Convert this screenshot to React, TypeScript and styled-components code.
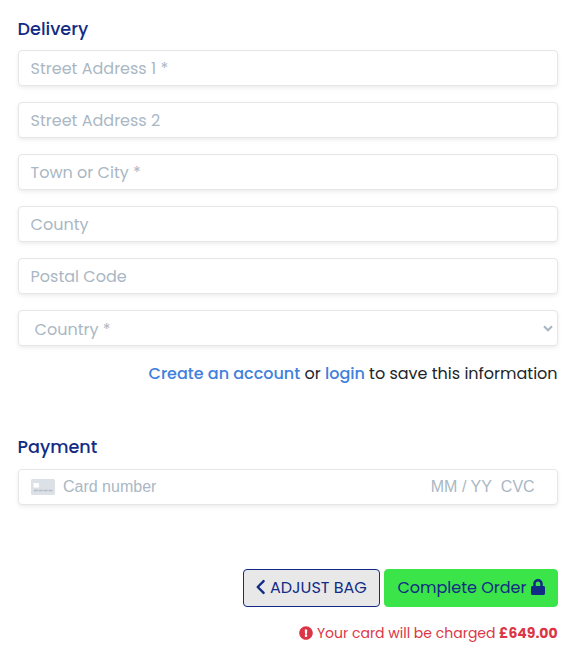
import React from 'react';
import styled, { createGlobalStyle } from 'styled-components';
import { FaLock, FaExclamationCircle } from 'react-icons/fa';

const GlobalStyle = createGlobalStyle`
  * { box-sizing: border-box; }
  body { margin: 0; background: #fff; }
  body, input, select, button {
    font-family: Poppins, Inter, "Open Sans", sans-serif;
  }
`;

const Form = styled.form`
  width: 580px;
  height: 667px;
  padding: 17px 22.4px 0 17.6px;
  font-size: 16px;
  line-height: 24px;
  color: #212529;
  overflow: hidden;
`;

const Legend = styled.h2`
  margin: 0 0 9px;
  height: 24px;
  font-size: 17.6px;
  line-height: 24px;
  font-weight: 500;
  color: #122b85;
`;

const PaymentLegend = styled(Legend)`
  margin-bottom: 10px;
`;

const Fields = styled.div`
  display: flex;
  flex-direction: column;
  gap: 16px;
`;

const Box = styled.div`
  display: flex;
  align-items: center;
  height: 36px;
  padding: 0 12px;
  background: #fff;
  border: 1px solid #e4e7ea;
  border-radius: 4px;
  box-shadow: 0 2px 4px rgba(0, 0, 0, 0.075);
`;

const Input = styled.input`
  width: 100%;
  padding: 2px 0 0;
  border: 0;
  outline: 0;
  background: transparent;
  font-size: 16px;
  line-height: 24px;
  &::placeholder { color: #aab7c4; opacity: 1; }
`;

const Select = styled.select`
  appearance: none;
  flex: 1;
  height: 34px;
  padding: 2px 0 0 4px;
  border: 0;
  background: transparent;
  color: #aab7c4;
  font-size: 16px;
`;

const Arrow = styled.svg`
  width: 10px;
  height: 7px;
  margin-right: -8px;
`;

const Account = styled.p`
  margin: 16px 0 49px;
  text-align: right;
  white-space: nowrap;
`;

const Link = styled.a`
  color: #4180dc;
  font-weight: 500;
`;

const CardText = styled.span`
  font-family: "Liberation Sans", Arial, sans-serif;
  font-size: 16px;
  color: #aab7c4;
  white-space: nowrap;
`;

const CardNumber = styled(CardText)`
  flex: 1;
  margin-left: 8.4px;
`;

const Expiry = styled(CardText)`
  margin-right: 9px;
`;

const Cvc = styled(CardText)`
  margin-right: 10px;
`;

const Actions = styled.div`
  display: flex;
  justify-content: flex-end;
  gap: 4px;
  margin-top: 64px;
`;

const Button = styled.button<{ $primary?: boolean }>`
  display: flex;
  align-items: center;
  gap: 4.4px;
  width: ${(p) => (p.$primary ? 174 : 137)}px;
  height: 38px;
  padding: 0 0 0 ${(p) => (p.$primary ? 12.8 : 12)}px;
  border: 1px solid ${(p) => (p.$primary ? '#3be449' : '#122b85')};
  border-radius: 4px;
  background: ${(p) => (p.$primary ? '#3be449' : '#e8e8e8')};
  color: #122b85;
  font-size: 16px;
  line-height: 24px;
  white-space: nowrap;
  svg { flex: none; margin-bottom: 2px; }
`;

const LockIcon = styled(FaLock)`
  width: 14px;
  height: 16px;
`;

const Warning = styled.p`
  display: flex;
  align-items: center;
  justify-content: flex-end;
  gap: 3.6px;
  margin: 16px 0 0;
  font-size: 14px;
  line-height: 21px;
  color: #dc3545;
  white-space: nowrap;
  svg { margin-bottom: 1px; }
`;

const Amount = styled.strong`
  font-weight: 700;
`;

const addressFields = [
  'Street Address 1 *',
  'Street Address 2',
  'Town or City *',
  'County',
  'Postal Code',
];

function CardIcon() {
  return (
    <svg width="24" height="16" viewBox="0 0 24 16">
      <rect width="24" height="16" rx="1.5" fill="#dce1e8" />
      <rect x="2.5" y="4" width="5.5" height="4.5" rx="0.6" fill="#fff" />
      <path d="M2.8 11.5h18.8" stroke="#b4bbc6" strokeWidth="1.5" strokeDasharray="4 0.9" />
    </svg>
  );
}

function ChevronIcon() {
  return (
    <svg width="10" height="16" viewBox="0 0 10 16" fill="none">
      <path d="M7.6 2.1 1.7 8l5.9 5.9" stroke="currentColor" strokeWidth="2.4" strokeLinecap="round" strokeLinejoin="round" />
    </svg>
  );
}

export default function App() {
  return (
    <>
      <GlobalStyle />
      <Form onSubmit={(e) => e.preventDefault()}>
        <Legend>Delivery</Legend>
        <Fields>
          {addressFields.map((label) => (
            <Box key={label}>
              <Input placeholder={label} />
            </Box>
          ))}
          <Box>
            <Select defaultValue="" aria-label="Country">
              <option value="">Country *</option>
            </Select>
            <Arrow viewBox="0 0 10 7" fill="none">
              <path d="M1 1.2 5 5.2 9 1.2" stroke="#aab7c4" strokeWidth="2.2" />
            </Arrow>
          </Box>
        </Fields>
        <Account>
          <Link>Create an account</Link> or <Link>login</Link> to save this information
        </Account>
        <PaymentLegend>Payment</PaymentLegend>
        <Box>
          <CardIcon />
          <CardNumber>Card number</CardNumber>
          <Expiry>MM / YY</Expiry>
          <Cvc>CVC</Cvc>
        </Box>
        <Actions>
          <Button type="button">
            <ChevronIcon />
            <span>ADJUST BAG</span>
          </Button>
          <Button type="submit" $primary>
            <span>Complete Order</span>
            <LockIcon />
          </Button>
        </Actions>
        <Warning>
          <FaExclamationCircle size={14} />
          <span>Your card will be charged</span>
          <Amount>£649.00</Amount>
        </Warning>
      </Form>
    </>
  );
}
